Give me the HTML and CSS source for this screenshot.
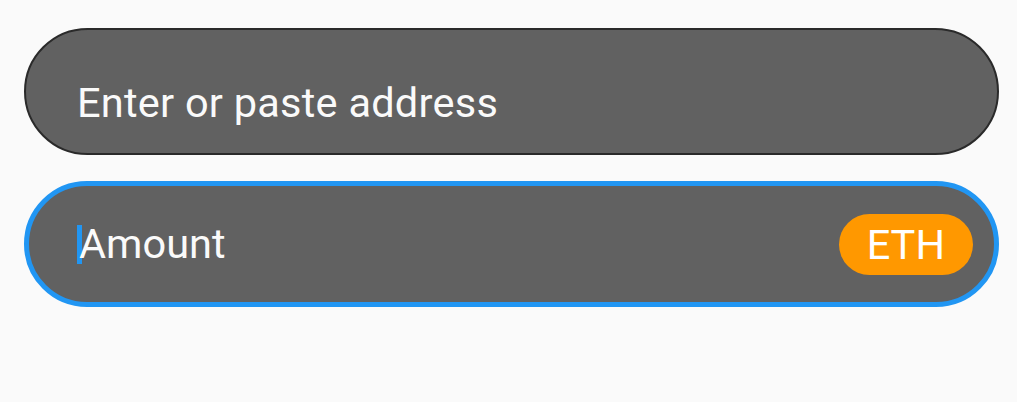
FILE: index.html
```html
<!DOCTYPE html>
<html>
<head>
<meta charset="utf-8">
<link rel="stylesheet" href="styles.css">
</head>
<body>
<div class="form">
  <div class="field field-address">
    <span class="hint hint-address">Enter or paste address</span>
  </div>
  <div class="field field-amount">
    <span class="input"><span class="caret"></span><span class="hint">Amount</span></span>
    <span class="badge">ETH</span>
  </div>
</div>
</body>
</html>
```

FILE: styles.css
```css
html, body {
  margin: 0;
  padding: 0;
  background: #fafafa;
}
body {
  font-family: Roboto, "Noto Sans", sans-serif;
  color: #ffffff;
}
.form {
  display: flex;
  flex-direction: column;
  gap: 26px;
  padding: 28px 18px 0 24px;
}
.field {
  box-sizing: border-box;
  width: 975px;
  background: #616161;
  border-radius: 64px;
  display: flex;
  font-size: 41.5px;
  line-height: 48px;
}
.field-address {
  height: 127px;
  border: 2px solid #2a2a2a;
  padding: 49px 0 0 51px;
  align-items: flex-start;
}
.hint-address {
  letter-spacing: 0.25px;
}
.field-amount {
  height: 126px;
  border: 5px solid #2196f3;
  padding: 0 21px 0 48px;
  align-items: center;
  justify-content: space-between;
}
.input {
  display: flex;
  align-items: center;
}
.caret {
  display: inline-block;
  width: 5px;
  height: 39px;
  background: #2196f3;
  margin-right: -3px;
}
.hint {
  color: #fafafa;
}
.badge {
  background: #ff9800;
  color: #ffffff;
  height: 61px;
  border-radius: 31px;
  padding: 0 28px;
  display: flex;
  align-items: center;
  line-height: 61px;
}
```
